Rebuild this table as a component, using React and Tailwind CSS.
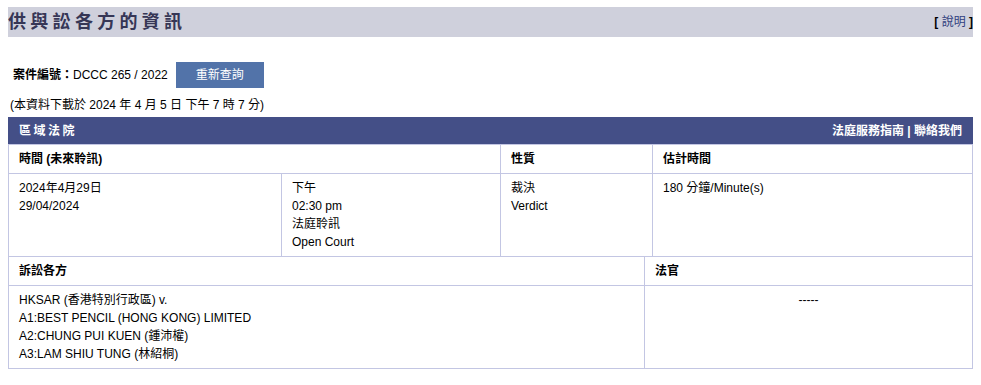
export default function App() {
  const cell = 'border border-[#c3c6e3] px-[10px] py-[5px] align-top leading-[18px]';
  const head = `${cell} font-bold`;

  return (
    <div
      className="min-h-screen bg-white px-2 pt-[7px] text-[12px] text-black"
      style={{ fontFamily: '"Liberation Sans", Arial, "Noto Sans CJK TC", sans-serif' }}
    >
      {/* Page title */}
      <div className="flex h-[30px] items-center justify-between bg-[#cfd0dc]">
        <h1 className="text-[18px] font-bold tracking-[4.3px] text-[#363656]">供與訟各方的資訊</h1>
        <span className="font-bold">
          [ <a className="font-normal text-[#2f3f7f]">說明</a> ]
        </span>
      </div>

      {/* Case number */}
      <div className="mt-[25px] flex items-center pl-[5px]">
        <span className="font-bold">案件編號：</span>
        <span>DCCC 265 / 2022</span>
        <button className="ml-[8px] h-[26px] w-[88px] bg-[#5273a9] text-[12px] text-white">重新查詢</button>
      </div>
      <div className="mt-[9px] pl-[2px] leading-[16px]">(本資料下載於 2024 年 4 月 5 日 下午 7 時 7 分)</div>

      {/* Court header */}
      <div className="mt-[4px] flex h-[27px] items-center justify-between bg-[#444f87] pl-[11px] pr-[11px] font-bold text-white">
        <span className="tracking-[2.5px]">區域法院</span>
        <span>法庭服務指南 | 聯絡我們</span>
      </div>

      <table className="w-full table-fixed border-collapse">
        <colgroup>
          <col className="w-[273px]" />
          <col className="w-[219px]" />
          <col className="w-[152px]" />
          <col />
        </colgroup>
        <tbody>
          <tr>
            <td colSpan={2} className={head}>時間 (未來聆訊)</td>
            <td className={head}>性質</td>
            <td className={head}>估計時間</td>
          </tr>
          <tr>
            <td className={cell}>
              2024年4月29日<br />29/04/2024
            </td>
            <td className={cell}>
              下午<br />02:30 pm<br />法庭聆訊<br />Open Court
            </td>
            <td className={cell}>
              裁決<br />Verdict
            </td>
            <td className={cell}>180 分鐘/Minute(s)</td>
          </tr>
        </tbody>
      </table>

      <table className="w-full table-fixed border-collapse">
        <colgroup>
          <col className="w-[636px]" />
          <col />
        </colgroup>
        <tbody>
          <tr>
            <td className={`${head} border-t-0`}>訴訟各方</td>
            <td className={`${head} border-t-0`}>法官</td>
          </tr>
          <tr>
            <td className={cell}>
              HKSAR (香港特別行政區) v.<br />
              A1:BEST PENCIL (HONG KONG) LIMITED<br />
              A2:CHUNG PUI KUEN (鍾沛權)<br />
              A3:LAM SHIU TUNG (林紹桐)
            </td>
            <td className={`${cell} text-center`}>-----</td>
          </tr>
        </tbody>
      </table>
    </div>
  );
}
